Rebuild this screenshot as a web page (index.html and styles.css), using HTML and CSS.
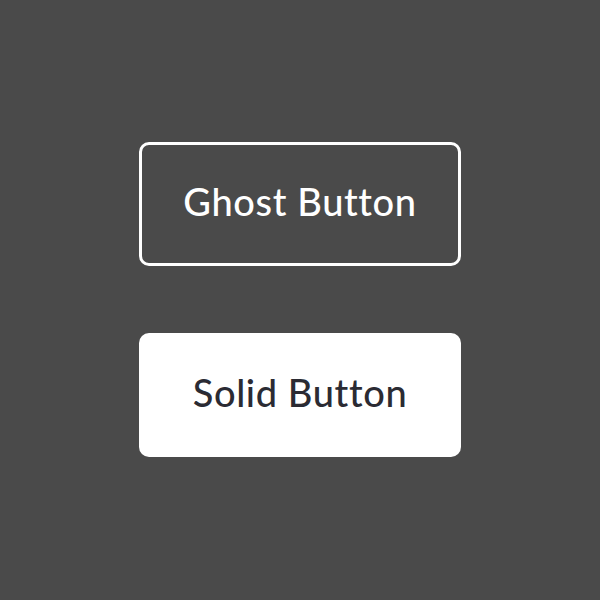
FILE: index.html
```html
<!DOCTYPE html>
<html lang="en">
<head>
    <meta charset="UTF-8">
    <meta name="viewport" content="width=device-width, initial-scale=1.0">
    <title>Buttons</title>
    <link rel="stylesheet" href="styles.css">
</head>
<body>
    <div class="container">
        <button class="btn btn-ghost">Ghost Button</button>
        <button class="btn btn-solid">Solid Button</button>
    </div>
</body>
</html>
```

FILE: styles.css
```css
body {
    margin: 0;
    background: #4a4a4a;
    font-family: Lato, 'Open Sans', sans-serif;
}
.container {
    height: 600px;
    display: flex;
    flex-direction: column;
    align-items: center;
    justify-content: center;
    gap: 67px;
    padding-bottom: 1px;
    box-sizing: border-box;
}
.btn {
    width: 322px;
    height: 124px;
    border-radius: 10px;
    padding: 0 0 6px;
    font-family: inherit;
    font-size: 38px;
    font-weight: 500;
    letter-spacing: 0.6px;
    cursor: pointer;
}
.btn-ghost {
    background: transparent;
    border: 3px solid #fff;
    color: #fff;
}
.btn-solid {
    background: #fff;
    border: none;
    color: #2b2b33;
}
```
